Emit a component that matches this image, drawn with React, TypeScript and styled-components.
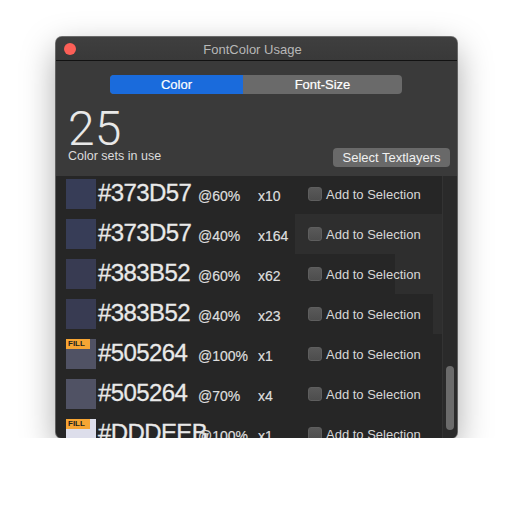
import styled, { createGlobalStyle } from "styled-components";

const GlobalStyle = createGlobalStyle`
  body {
    margin: 0;
    background: #ffffff;
    font-family: "Liberation Sans", Arial, sans-serif;
  }
`;

const WindowStyle = styled.div`
  width: 401px;
  height: 401px;
  margin: 37px 0 0 56px;
  border-radius: 6px;
  background: #3a3a3a;
  box-shadow: 0 0 0 1px rgba(0, 0, 0, 0.55), 0 12px 34px rgba(0, 0, 0, 0.35);
  display: flex;
  flex-direction: column;
  overflow: hidden;
`;

const TitleBarStyle = styled.div`
  height: 23px;
  flex: none;
  display: flex;
  align-items: center;
  padding: 0 8px;
  background: linear-gradient(#3f3f3f, #393939);
  border-bottom: 1px solid #121212;
`;

const CloseDot = styled.div`
  width: 12px;
  height: 12px;
  border-radius: 50%;
  background: #fc5f57;
`;

const TitleText = styled.div`
  flex: 1;
  text-align: center;
  margin: 1px 20px 0 0;
  font-size: 13px;
  color: #b8b8b8;
`;

const HeaderStyle = styled.div`
  flex: none;
  padding: 14px 7px 13px 12px;
  display: flex;
  flex-direction: column;
`;

const SegmentStyle = styled.div`
  align-self: center;
  margin-right: 6px;
  display: flex;
  width: 292px;
  height: 19px;
  border-radius: 4px;
  overflow: hidden;
  background: #6a6a6a;
`;

const SegmentItem = styled.div<{ $active?: boolean; $w: number }>`
  width: ${(p) => p.$w}px;
  display: flex;
  align-items: center;
  justify-content: center;
  font-size: 13px;
  color: #ffffff;
  -webkit-text-stroke: 0.2px #ffffff;
  background: ${(p) => (p.$active ? "#1a6bdc" : "transparent")};
`;

const StatsRow = styled.div`
  margin-top: 15px;
  display: flex;
  justify-content: space-between;
  align-items: flex-end;
`;

const BigNumber = styled.div`
  font-family: Roboto, "Liberation Sans", sans-serif;
  font-weight: 300;
  font-size: 48px;
  line-height: 40px;
  color: #e8e8e8;
`;

const Caption = styled.div`
  font-size: 12.5px;
  line-height: 14px;
  color: #dcdcdc;
`;

const SelectButton = styled.div`
  height: 19px;
  width: 117px;
  margin-bottom: -4px;
  border-radius: 4px;
  background: #696969;
  color: #f0f0f0;
  font-size: 13px;
  display: flex;
  align-items: center;
  justify-content: center;
`;

const ListStyle = styled.div`
  flex: 1;
  display: flex;
  background: #262626;
  overflow: hidden;
`;

const RowsStyle = styled.div`
  flex: 1;
  margin-top: -2px;
`;

const RowStyle = styled.div`
  box-sizing: border-box;
  height: 40px;
  padding: 7px 0 0 10px;
  display: grid;
  grid-template-columns: 30px 102px 60px 50px auto;
  align-items: baseline;
`;

const Swatch = styled.div<{ $color: string }>`
  align-self: start;
  margin-top: -2px;
  width: 30px;
  height: 30px;
  background: ${(p) => p.$color};
  position: relative;
`;

const FillBadge = styled.span`
  position: absolute;
  left: 0;
  top: 0;
  width: 24px;
  height: 10px;
  background: #f6a534;
  color: #1e1e1e;
  font-size: 8px;
  font-weight: 700;
  line-height: 10px;
  padding-left: 2px;
  box-sizing: border-box;
`;

const HexText = styled.div`
  padding-left: 2px;
  font-size: 24px;
  line-height: 24px;
  letter-spacing: -0.6px;
  color: #e9e9e9;
  -webkit-text-stroke: 0.3px #e9e9e9;
`;

const SmallText = styled.div`
  font-size: 14px;
  line-height: 14px;
  color: #dedede;
  -webkit-text-stroke: 0.2px #dedede;
`;

const CheckLabel = styled.label`
  display: inline-flex;
  align-items: center;
  gap: 4px;
  font-size: 13px;
  line-height: 15px;
  color: #d8d8d8;
`;

const CheckBox = styled.span`
  width: 14px;
  height: 14px;
  box-sizing: border-box;
  border-radius: 3px;
  border: 1px solid #5e5e5e;
  background: linear-gradient(#595959, #4d4d4d);
`;

const TrackStyle = styled.div`
  width: 14px;
  flex: none;
  background: #2a2a2a;
  border-left: 1px solid #333333;
  display: flex;
  justify-content: center;
`;

const Thumb = styled.div`
  margin-top: 190px;
  width: 8px;
  height: 64px;
  border-radius: 4px;
  background: #6b6b6b;
`;

type TColorSet = {
  hex: string;
  opacity: string;
  count: number;
  fill: boolean;
  bar: number;
};

const colorSets: TColorSet[] = [
  { hex: "#373D57", opacity: "@60%", count: 10, fill: false, bar: 0 },
  { hex: "#373D57", opacity: "@40%", count: 164, fill: false, bar: 147 },
  { hex: "#383B52", opacity: "@60%", count: 62, fill: false, bar: 47 },
  { hex: "#383B52", opacity: "@40%", count: 23, fill: false, bar: 9 },
  { hex: "#505264", opacity: "@100%", count: 1, fill: true, bar: 0 },
  { hex: "#505264", opacity: "@70%", count: 4, fill: false, bar: 0 },
  { hex: "#DDDEEB", opacity: "@100%", count: 1, fill: true, bar: 0 },
];

export default function App() {
  const rows = colorSets.map((el, i) => (
    <RowStyle
      key={i}
      style={{
        background: `linear-gradient(to left, #2e2e2e ${el.bar}px, transparent ${el.bar}px)`,
      }}
    >
      <Swatch $color={el.hex}>{el.fill && <FillBadge>FILL</FillBadge>}</Swatch>
      <HexText>{el.hex}</HexText>
      <SmallText>{el.opacity}</SmallText>
      <SmallText>x{el.count}</SmallText>
      <CheckLabel>
        <CheckBox />
        Add to Selection
      </CheckLabel>
    </RowStyle>
  ));

  return (
    <>
      <GlobalStyle />
      <WindowStyle>
        <TitleBarStyle>
          <CloseDot />
          <TitleText>FontColor Usage</TitleText>
        </TitleBarStyle>
        <HeaderStyle>
          <SegmentStyle>
            <SegmentItem $active $w={133}>Color</SegmentItem>
            <SegmentItem $w={159}>Font-Size</SegmentItem>
          </SegmentStyle>
          <StatsRow>
            <div>
              <BigNumber>25</BigNumber>
              <Caption>Color sets in use</Caption>
            </div>
            <SelectButton>Select Textlayers</SelectButton>
          </StatsRow>
        </HeaderStyle>
        <ListStyle>
          <RowsStyle>{rows}</RowsStyle>
          <TrackStyle>
            <Thumb />
          </TrackStyle>
        </ListStyle>
      </WindowStyle>
    </>
  );
}
